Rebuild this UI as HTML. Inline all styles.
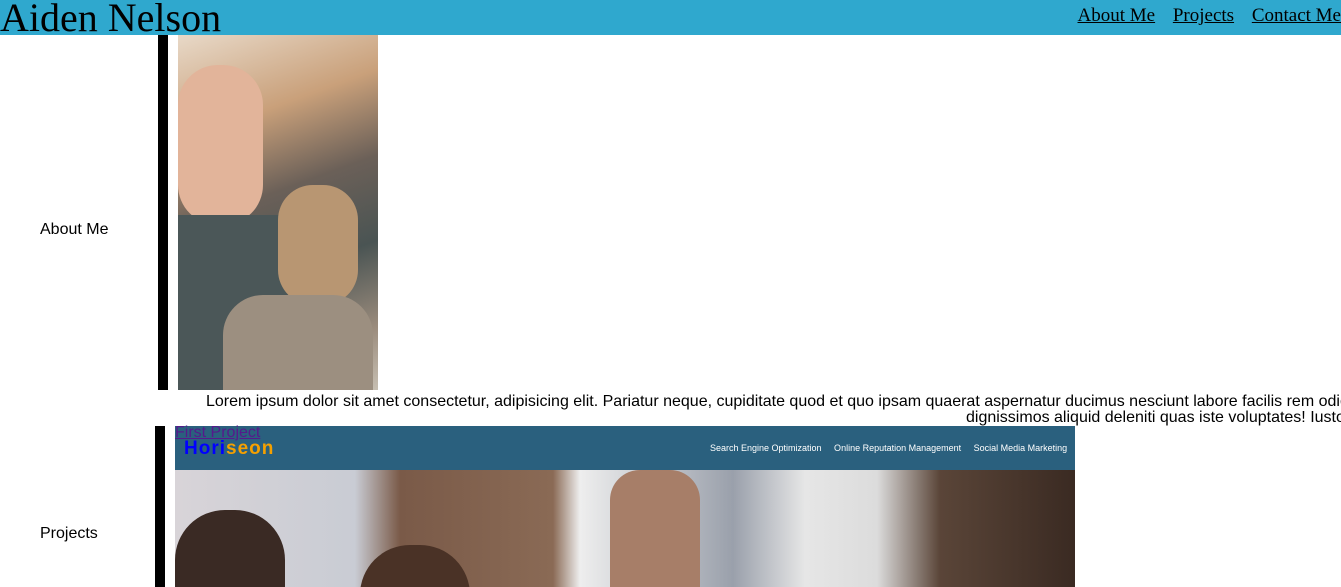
<!DOCTYPE html>
<html style="overflow:hidden"><head><style>
html,body{overflow:hidden}
body{margin:0;width:1341px;height:587px;position:relative;background:#fff;font-family:"Liberation Sans",sans-serif}
.a{position:absolute}
#hd{left:0;top:0;width:1341px;height:35px;background:#2fa8ce}
#hd h1{position:absolute;left:0;top:-6px;margin:0;font:normal 40px "Liberation Serif",serif;color:#000;white-space:nowrap}
#nav{right:0;top:5px;font:19px "Liberation Serif",serif;white-space:nowrap}
#nav a{color:#000;margin-left:13px;text-decoration:underline}
.lbl{font-size:16px;color:#000}
.t{font-size:16px;white-space:nowrap;color:#000}
</style></head><body>
<div id="hd" class="a"><h1>Aiden Nelson</h1><div id="nav" class="a"><a>About Me</a> <a>Projects</a> <a>Contact Me</a></div></div>
<div class="a lbl" style="left:40px;top:221px">About Me</div>
<div class="a" style="left:158px;top:35px;width:10px;height:355px;background:#000"></div>
<div class="a" style="left:178px;top:35px;width:200px;height:355px;overflow:hidden;background:linear-gradient(160deg,#e8d9c8 0%,#c9a07a 25%,#6b6058 45%,#4a5453 65%,#9a8b7c 85%,#c7bfb2 100%)">
<div class="a" style="left:0;top:30px;width:85px;height:160px;border-radius:40px;background:#e2b49a"></div>
<div class="a" style="left:0;top:180px;width:110px;height:175px;background:#4b5758"></div>
<div class="a" style="left:100px;top:150px;width:80px;height:120px;border-radius:35px;background:#b89672"></div>
<div class="a" style="left:45px;top:260px;width:150px;height:95px;border-radius:40px 40px 0 0;background:#9c8f80"></div>
</div>
<div class="a t" style="left:206px;top:393px">Lorem ipsum dolor sit amet consectetur, adipisicing elit. Pariatur neque, cupiditate quod et quo ipsam quaerat aspernatur ducimus nesciunt labore facilis rem odio</div>
<div class="a t" style="left:966px;top:409px">dignissimos aliquid deleniti quas iste voluptates! Iusto</div>
<div class="a lbl" style="left:40px;top:525px">Projects</div>
<div class="a" style="left:155px;top:426px;width:10px;height:161px;background:#000"></div>
<div class="a" style="left:175px;top:426px;width:900px;height:44px;background:#2a607e"></div>
<div class="a" style="left:175px;top:470px;width:900px;height:117px;overflow:hidden;background:linear-gradient(90deg,#d8d4d8 0%,#c9ccd4 20%,#7a5a48 25%,#8a6a55 42%,#eeeeee 45%,#9aa0ab 62%,#e6e6e6 70%,#dcdcdc 78%,#5a4538 85%,#3a2a22 100%)">
<div class="a" style="left:0;top:40px;width:110px;height:90px;border-radius:50px 50px 0 0;background:#3a2a24"></div>
<div class="a" style="left:185px;top:75px;width:110px;height:60px;border-radius:50px 50px 0 0;background:#4a3226"></div>
<div class="a" style="left:435px;top:0;width:90px;height:117px;border-radius:30px 30px 0 0;background:#a77e68"></div>
</div>
<div class="a" style="left:175px;top:424px;font-size:16px;color:#551a8b;text-decoration:underline">First Project</div>
<div class="a" style="left:184px;top:438px;font-size:19px;font-weight:bold;letter-spacing:1px;color:#00f">Hori<span style="color:#f5a000">seon</span></div>
<div class="a" style="left:710px;top:443px;font-size:9px;color:#fff;white-space:nowrap">Search Engine Optimization &nbsp;&nbsp;&nbsp; Online Reputation Management &nbsp;&nbsp;&nbsp; Social Media Marketing</div>
</body></html>
